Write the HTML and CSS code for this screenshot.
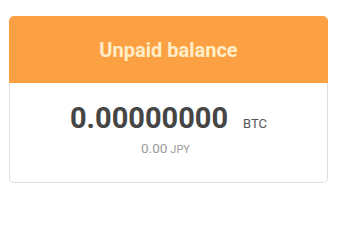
FILE: index.html
```html
<!DOCTYPE html>
<html>
<head>
<meta charset="utf-8">
<link rel="stylesheet" href="styles.css">
</head>
<body>
<div class="card">
  <div class="card-header">Unpaid balance</div>
  <div class="card-body">
    <div class="amount"><span class="value">0.00000000</span><span class="unit">BTC</span></div>
    <div class="fiat"><span class="fiat-value">0.00</span><span class="fiat-unit">JPY</span></div>
  </div>
</div>
</body>
</html>
```
FILE: styles.css
```css
html, body {
  margin: 0;
  padding: 0;
  background: #fff;
  font-family: Roboto, "Liberation Sans", sans-serif;
}
.card {
  margin: 16px 0 0 9px;
  width: 319px;
}
.card-header {
  height: 67px;
  background: #fba143;
  border-radius: 5px 5px 0 0;
  color: #ffedc8;
  font-size: 20px;
  font-weight: 700;
  display: flex;
  align-items: center;
  justify-content: center;
}
.card-body {
  height: 100px;
  box-sizing: border-box;
  border: 1px solid #dedede;
  border-top: none;
  border-radius: 0 0 5px 5px;
  padding-top: 19px;
  text-align: center;
}
.amount {
  line-height: 32px;
  color: #454545;
}
.value {
  font-size: 29px;
  font-weight: 700;
}
.unit {
  font-size: 13px;
  margin-left: 15px;
  color: #555;
}
.fiat {
  line-height: 16px;
  color: #9a9a9a;
  padding-right: 6px;
}
.fiat-value {
  font-size: 13.5px;
}
.fiat-unit {
  font-size: 11px;
  margin-left: 3px;
}
```
